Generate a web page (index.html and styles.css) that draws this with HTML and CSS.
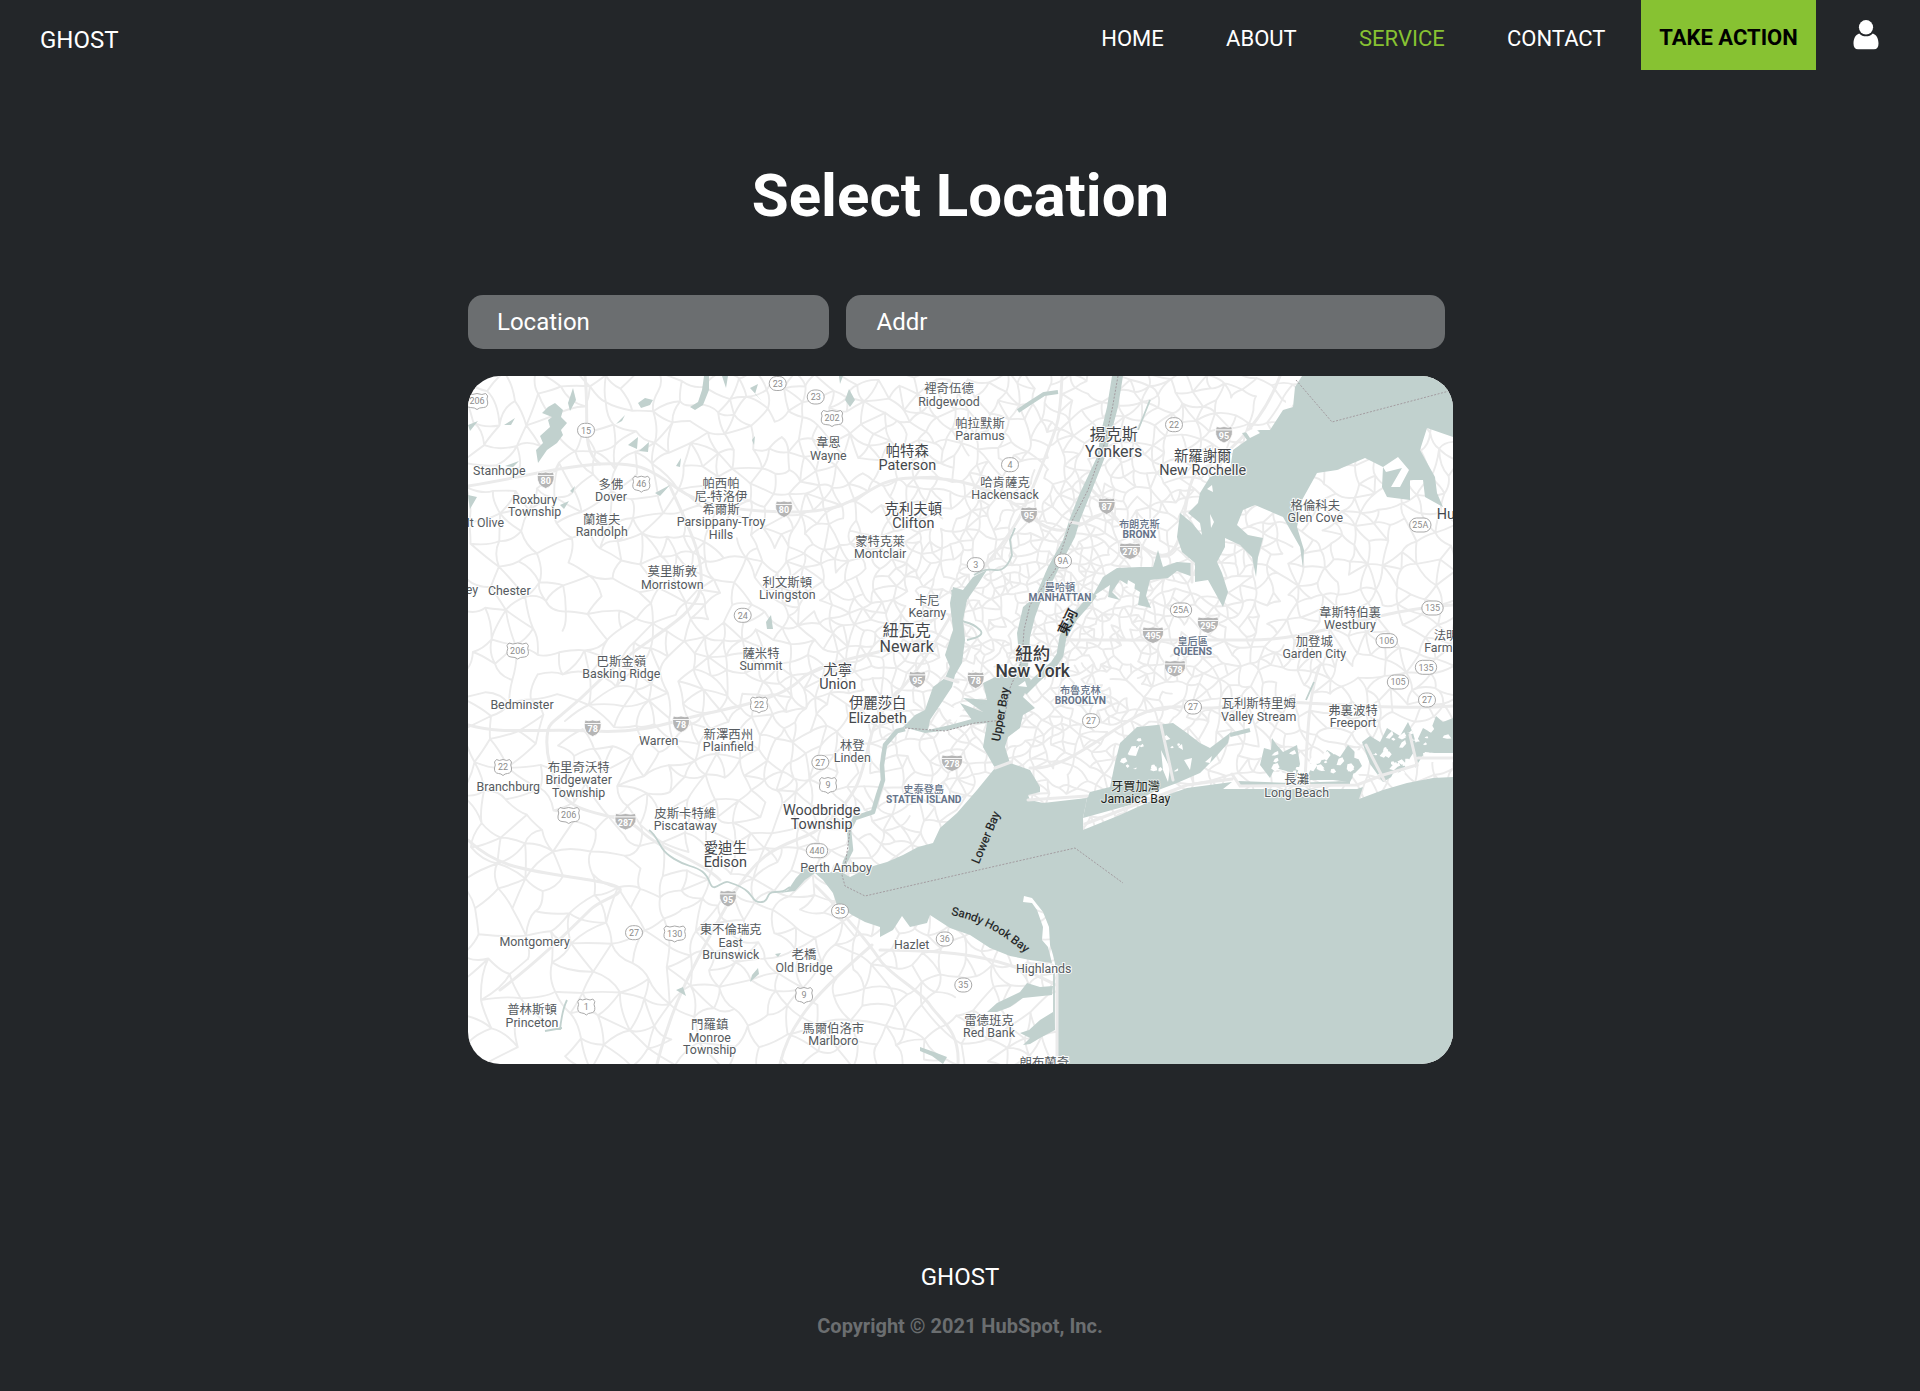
FILE: index.html
```html
<!DOCTYPE html>
<html lang="en">
<head>
<meta charset="utf-8">
<title>Ghost – Select Location</title>
<link rel="stylesheet" href="styles.css">
</head>
<body>
<header class="header">
  <a class="brand">GHOST</a>
  <nav class="nav">
    <a>HOME</a>
    <a>ABOUT</a>
    <a class="active">SERVICE</a>
    <a>CONTACT</a>
  </nav>
  <a class="cta">TAKE ACTION</a>
  <svg class="user" viewBox="0 0 26 30" width="26" height="30">
    <ellipse cx="13" cy="7.3" rx="7.1" ry="7.3"/>
    <path d="M6.2 13.4C8 15.3 10.300 16.300 13 16.300S18 15.300 19.800 13.400C23.800 15 25.500 18.500 25.500 23.500C25.500 27.200 24 29.300 21 29.300H5C2 29.300 .5 27.200 .5 23.500C.5 18.500 2.200 15 6.200 13.400Z"/>
  </svg>
</header>
<main class="main">
  <h1>Select Location</h1>
  <form class="fields">
    <div class="field">Location</div>
    <div class="field wide">Addr</div>
  </form>
  <div class="map">
    <svg viewBox="468 376 985 688" width="985" height="688">
      <g id="mesh" class="road"></g>
      <g class="road major">
        <path d="M468 725C500 735 540 728 592 731S670 722 700 715S780 700 800 680S880 655 920 640"/>
        <path d="M468 486C520 478 560 466 600 464S650 470 668 482S700 510 784 512S860 480 910 478S1000 490 1029 515S1070 530 1100 515"/>
        <path d="M585 376C590 420 580 450 600 464M668 482C690 530 706 560 700 590S640 640 600 680S550 720 548 730S545 760 560 790S620 810 640 830S700 860 720 880"/>
        <path d="M657 1064C670 1010 690 970 730 900S800 850 830 820S860 780 870 740S900 700 930 650S960 600 990 560S1020 520 1040 470S1060 420 1062 376"/>
        <path d="M468 840C500 870 530 870 590 880S605 895 590 910S540 960 500 990"/>
        <path d="M815 885C850 920 870 945 880 960S920 990 930 1005S960 1030 958 1064M872 945C820 990 790 1020 780 1064M880 950C950 950 1000 955 1056 985"/>
        <path d="M1060 640C1100 640 1180 640 1250 640S1370 610 1453 605M1030 768C1060 770 1090 745 1130 720S1200 715 1230 705S1380 712 1453 706M1320 665C1310 690 1308 720 1305 780"/>
        <path d="M1080 480C1110 500 1130 550 1160 555S1180 480 1200 470S1260 430 1280 376"/>
      </g>
      <g class="water">
        <path d="M815 873L823 880L833 893L837 905L852 915L865 922L880 927V937L893 930L902 916L910 927L927 923L930 915L950 928L970 935L990 948L1010 956L1030 960L1052 963L1048 947L1042 940L1043 927L1037 910L1032 903L1023 902L1024 896L1032 898L1043 912L1049 927L1050 945L1053 955L1057 973L1058 1017L1056 1064H1453V777L1433 778L1407 783L1383 790L1359 799L1363 787L1357 789L1320 789L1270 789L1223 789L1232 782L1187 788L1153 800L1120 815L1083 830V818L1087 798L1043 803L1030 800L1028 795L1040 792V787L1030 770L1010 763L1005 747L1008 737L1020 728L1023 715L1035 708L1023 697L1031 680L1020 665L983 683L987 700L963 698L983 712L960 703L972 720L987 723L983 747L995 768L977 790L957 813L940 828L933 843L918 847L903 855L887 862L870 867L850 877L843 873L838 872Z"/>
        <path d="M1112 376L1107 407L1102 428L1097 457L1080 493L1070 518L1063 540L1048 567L1035 597L1023 607L1017 633L1020 667H1028L1030 637L1035 617L1040 603L1053 580L1063 560L1075 537L1080 520L1092 490L1105 457L1112 430L1118 407L1123 376Z"/>
        <path d="M903 727L915 715L925 710L933 687L945 678L950 667L945 655L953 630L950 603L953 587L963 590L973 577L987 570L978 584L967 600L963 620L965 640L962 663L955 675L952 687L930 720L928 730L950 725L972 719H988V723L972 724L950 730L925 733Z"/>
        <path d="M1302 376L1295 387L1293 407L1283 410L1270 430H1260L1242 433L1247 440L1233 450L1230 470L1210 477L1200 493L1198 503L1188 513L1200 523L1202 535L1192 523L1180 513L1177 537L1182 552L1195 563V582L1208 580L1223 607L1228 592L1222 573L1217 562L1225 547V538L1240 545L1252 557L1256 577L1258 557L1263 538L1248 535L1237 525L1243 510L1255 505L1283 517L1292 533L1300 547L1303 568L1304 550L1297 527L1302 500L1317 473L1337 470L1365 458L1383 467L1382 487L1387 497L1410 500V480L1423 480L1425 497L1443 507L1437 493L1435 477L1420 450L1427 428L1453 437V376Z"/>
        <path d="M1120 743L1137 727L1157 725L1173 723L1187 733L1200 743L1210 748L1230 733L1228 743L1213 760L1200 773L1177 783L1153 792L1130 805L1083 818L1087 798L1090 792L1110 787L1115 763Z"/>
        <path d="M1092 597L1103 577L1117 568L1140 567L1153 567L1158 550L1163 567L1177 562L1192 563L1193 577L1177 571L1168 578L1150 580L1146 596L1151 608L1138 605L1140 592L1120 580L1112 592L1120 600L1108 597L1110 585Z"/>
        <path d="M1260 765L1264 748L1271 750L1272 738L1276 744L1283 752L1297 745L1300 764L1296 778L1290 772L1275 768L1270 778ZM1306 780L1312 766L1320 763L1327 750L1340 757L1348 745L1355 752L1362 766L1355 773L1350 782L1333 780ZM1362 742L1370 736L1380 742L1387 728L1400 736L1408 722L1413 733L1417 747L1410 758L1403 770L1383 782L1370 764ZM1415 745L1423 728L1430 732L1436 716L1443 722L1453 718V755L1425 752L1415 768Z"/>
        <path d="M987 1012L997 1003L1020 992L1027 983L1040 987L1053 986L1052 995L1023 998L1010 1007L997 1012ZM1023 1045L1030 1038L1020 1033L1029 1030L1040 1020L1053 1012L1055 1030L1040 1038L1030 1044ZM788 890L796 878L808 865L815 873L805 880L795 891L780 893Z"/>
        <path d="M555 403L563 410L561 417L567 423L561 430L563 435L557 443L547 450L538 463L536 450L543 443L540 436L550 427L548 420L552 417L542 413L548 407ZM568 403L573 388L576 400L570 411ZM638 403L645 398L653 400L650 405L641 408ZM690 407L698 402L702 390L704 376H709V390L703 405L695 410ZM722 376H728L726 388ZM845 400L849 389L855 400L850 407ZM843 376H839L840 384ZM628 445L638 437L637 449ZM639 451L649 442L648 452ZM616 424L625 415L622 421ZM504 425L515 418L511 425ZM468 495L477 497L470 509ZM468 425L478 421L470 431ZM676 466L681 458L680 467ZM752 440L755 436L754 445ZM505 466L519 461L513 467ZM655 493L670 485L660 496ZM750 388L758 384L755 394L762 401ZM560 505L569 501L564 509ZM570 491L575 486L573 493ZM766 622L771 615L773 629H767ZM676 990L683 987L686 996ZM752 975L758 968L759 974L750 982ZM775 954L781 953L778 957ZM920 1047L934 1052L947 1057L943 1064L932 1056L920 1051Z"/>
        <path class="line w6" d="M1024 692L1036 680L1054 664L1060 655L1063 637L1074 618L1088 602L1094 594"/>
        <path class="line w5" d="M905 729L897 731L885 745L882 765L883 780L878 795L873 812L855 818L849 830L851 850L845 862L843 873"/>
        <path class="line w2" d="M649 830C655 834 657 840 662 848S680 863 690 866S706 872 710 883S722 880 728 882S742 886 748 892S754 903 762 902S765 892 775 892S785 890 790 887"/>
        <path class="line w2" d="M974 575Q984 568 995 570T1012 555L1010 540L1015 528M1138 430L1150 400M952 590Q956 620 965 622T980 630T967 640M985 705L970 700M1306 700L1314 682M560 1030Q562 1010 567 1000M1054 973V1030M545 1031L562 1028"/>
        <path class="line w4" d="M1018 411L1030 403L1044 394L1058 392M1238 783L1290 785L1350 783M1230 735L1250 730"/>
      </g>
      <g class="land">
        <path d="M1383 467L1398 457L1409 470L1400 487H1391L1402 468L1386 472ZM1286 400L1293 398L1292 406L1286 405ZM1246 432L1255 428L1260 433L1250 438ZM1210 514L1214 522L1211 528ZM1207 489L1212 485L1213 492ZM1128 580L1135 584L1134 592L1127 586ZM1140 745L1136 756L1128 755ZM1161 750L1170 768L1168 782L1163 770ZM1190 770L1184 760L1192 758ZM1178 747L1182 744L1183 750ZM1205 762L1212 756L1210 763ZM1423 753H1453V762H1425ZM945 705L964 711L955 722L948 718ZM1018 686L1025 681L1027 687Z"/>
      </g>
      <g id="marsh" class="land"></g>
      <g class="road major">
        <path d="M995 768L1011 762M1161 725L1173 780M1192 563V582M1366 745L1384 780M1410 735L1417 765L1383 775L1357 785L1240 786L1232 774M1057 975V1064M1070 522L1082 524M1028 800L1087 796M1085 824L1187 785L1232 779M1418 758H1453M945 678L958 682"/>
      </g>
      <path class="border" d="M1296 380L1332 422L1453 390M850 830L846 860L842 875L845 886L865 896L1075 848L1123 883M1118 376L1112 410L1104 445L1088 490L1070 525L1055 570L1030 605L1024 630L1022 660L1010 688L1004 720L975 723L945 731L905 728"/>
      <g id="shields"></g>
      <g id="labels"></g>
      <defs><path id="sandy" d="M951 915Q987 921 1024 952L1034 961"/></defs>
      <text class="sea curved"><textPath href="#sandy">Sandy Hook Bay</textPath></text>
      <text class="sea mid" transform="translate(1004.500 715) rotate(-80)">Upper Bay</text>
      <text class="sea mid" transform="translate(989.500 839) rotate(-67)">Lower Bay</text>
      <text class="sea mid east" transform="translate(1072 624) rotate(-64)">東河</text>
    </svg>
  </div>
</main>
<footer class="footer">
  <div class="brand">GHOST</div>
  <p>Copyright © 2021 HubSpot, Inc.</p>
</footer>
<script src="map.js"></script>
</body>
</html>
```
FILE: styles.css
```css
* { box-sizing: border-box; }
body {
  margin: 0;
  height: 1391px;
  display: flex;
  flex-direction: column;
  background: #232629;
  color: #fff;
  font-family: Roboto, "Noto Sans CJK TC", sans-serif;
}
.header {
  height: 70px;
  display: flex;
  align-items: flex-start;
  padding: 0 41.500px 0 40px;
}
.brand { font-size: 24px; line-height: 28px; }
.header .brand { margin-top: 26px; }
.nav {
  display: flex;
  gap: 62.300px;
  margin: 26px 35.500px 0 auto;
  font-size: 22px;
  line-height: 26px;
}
.nav .active { color: #87c232; }
.cta {
  width: 175px;
  height: 70px;
  padding-top: 25px;
  background: #87c232;
  color: #000;
  font-size: 22px;
  font-weight: 700;
  line-height: 26px;
  text-align: center;
}
.user { margin: 20px 0 0 36.500px; fill: #fff; }
.main {
  width: 985px;
  margin: 0 auto;
}
h1 {
  margin: 91px 0 0;
  padding-left: 1px;
  font-size: 60px;
  font-weight: 700;
  line-height: 70px;
  text-align: center;
}
.fields {
  display: grid;
  grid-template-columns: 361px 599px;
  gap: 17px;
  margin: 64px 0 27px;
}
.field {
  height: 54px;
  padding-left: 29.500px;
  border-radius: 15px;
  background: #6b6e70;
  font-size: 24px;
  line-height: 54px;
}
.field.wide { padding-left: 31px; }
.map {
  height: 688px;
  border-radius: 32px;
  overflow: hidden;
  background: #fff;
}
.map svg { display: block; }
.road { fill: none; stroke: #ebebeb; stroke-width: 1.900; stroke-linecap: round; }
.road.major { stroke-width: 3; }
.water { fill: #c1d1ce; }
.water .line { fill: none; stroke: #c1d1ce; stroke-linejoin: round; }
.w2 { stroke-width: 1.800; }
.w4 { stroke-width: 4; }
.w5 { stroke-width: 4.500; }
.w6 { stroke-width: 7; }
.land { fill: #fff; }
.border { fill: none; stroke: #a39ca0; stroke-width: 1; stroke-dasharray: 2 1.500; }
#labels text {
  text-anchor: middle;
  fill: #565b60;
  stroke: #fff;
  stroke-width: 2.200px;
  stroke-opacity: .85;
  stroke-linejoin: round;
  paint-order: stroke;
  font-size: 12.400px;
}
#labels .m { font-size: 14.400px; fill: #45484c; }
#labels .l { font-size: 16px; fill: #45484c; }
#labels .x { font-size: 17.500px; font-weight: 500; fill: #3a3c40; }
#labels .b { font-size: 10.200px; font-weight: 700; fill: #66748a; }
#labels .b .cjk { font-weight: 500; }
#labels .d { font-size: 12.200px; fill: #1e1f20; stroke-opacity: .4; }
#labels .start { text-anchor: start; }
#labels .end { text-anchor: end; }
.sea { font-size: 12px; fill: #1c1d1e; stroke: #1c1d1e; stroke-width: .2px; }
.sea.mid { text-anchor: middle; }
.sea.curved { font-size: 11.700px; }
.sea.east { font-size: 13.500px; font-weight: 500; }
.route { fill: #fff; stroke: #a9a9a9; stroke-width: 1; }
.interstate { fill: #b5b5b5; stroke: #fff; stroke-width: .8; }
.num { font-size: 9px; text-anchor: middle; fill: #8c8c8c; }
.num.inv { font-weight: 700; fill: #fff; }
.footer {
  margin-top: 199px;
  text-align: center;
}
.footer p {
  margin: 23px 0 0;
  color: #6b6e70;
  font-size: 20px;
  font-weight: 700;
  line-height: 24px;
}
```
FILE: map.js
```js
const NS = 'http://www.w3.org/2000/svg';
function add(parent, tag, attrs, text) {
  const el = document.createElementNS(NS, tag);
  for (const k in attrs) el.setAttribute(k, attrs[k]);
  if (text) el.textContent = text;
  parent.appendChild(el);
  return el;
}
let seed = 7;
function rnd() {
  seed = (seed * 16807) % 2147483647;
  return seed / 2147483647;
}

// Street network: scattered junctions, denser near the city, joined to their close neighbours.
const pts = [];
const spacing = (x, y) => Math.max(5.6, 4 + 0.029 * Math.hypot(x - 1060, (y - 630) * 1.1));
for (let i = 0; i < 28000; i++) {
  const x = 460 + rnd() * 1000, y = 370 + rnd() * 700, r = spacing(x, y), r2 = r * r;
  if (pts.every(p => (p[0] - x) ** 2 + (p[1] - y) ** 2 > r2)) pts.push([x, y, r]);
}
let d = '';
pts.forEach((p, i) => {
  const near = [];
  pts.forEach((q, j) => {
    const s = (p[0] - q[0]) ** 2 + (p[1] - q[1]) ** 2;
    if (j !== i && s < p[2] * p[2] * 6) near.push([q, j, s]);
  });
  near.forEach(([q, j, s]) => {
    if (j < i) return;
    const mx = (p[0] + q[0]) / 2, my = (p[1] + q[1]) / 2;
    if (near.some(([t, k]) => k !== j && (t[0] - mx) ** 2 + (t[1] - my) ** 2 < s / 4)) return;
    if (rnd() < 0.22) return;
    const b = p[2] * 0.6;
    d += `M${p[0].toFixed(1)} ${p[1].toFixed(1)}Q${(mx + (rnd() - .5) * b).toFixed(1)} ${(my + (rnd() - .5) * b).toFixed(1)} ${q[0].toFixed(1)} ${q[1].toFixed(1)}`;
  });
});
add(document.getElementById('mesh'), 'path', { d });

// Small marsh islands in the southern bays.
let m = '';
[[1120, 735, 90, 45, 13], [1262, 748, 36, 26, 9], [1310, 750, 48, 28, 14], [1368, 733, 46, 44, 22], [1420, 728, 26, 24, 4]].forEach(([x, y, w, h, n]) => {
  for (let i = 0; i < n; i++) {
    const a = x + rnd() * w, b = y + rnd() * h, s = 1.5 + rnd() * 3;
    m += `M${a} ${b}l${s} ${-s * rnd()}l${s * rnd()} ${s}l${-s} ${s * rnd() * 1.5}l${-s} ${-s * rnd()}z`;
  }
});
add(document.getElementById('marsh'), 'path', { d: m });

// type (o state, u US, i interstate), x, y, number
const routes = `o 777.7 383.5 23|o 586 430.3 15|o 815.7 397 23|o 1010 464.7 4|o 975.7 564.7 3|o 1063 561 9A|o 1174 424.7 22|o 1420.3 525 25A|o 742.7 615.3 24|o 820.3 762.3 27|o 1091 720.7 27|o 1181 610 25A|o 1432.5 608 135|o 1386.7 640.7 106|o 1426 667.3 135|o 1398 682 105|o 1427 700 27|o 1193 707 27|o 817 850.7 440|o 840 911 35|o 944.7 939 36|o 963.3 985 35|o 634 932.7 27|u 477 401 206|u 641.3 483.7 46|u 832 418 202|u 517.7 650.5 206|u 759 704.5 22|u 503 767 22|u 568.7 815 206|u 828 785 9|u 674.7 933.5 130|u 586.3 1006.5 1|u 804 995 9|i 545.7 480 80|i 784 509 80|i 1029 515 95|i 1106.7 506 87|i 1224 434.5 95|i 1130 551 278|i 592.7 728 78|i 681 724 78|i 625.5 821.5 287|i 917.3 679.5 95|i 975.7 680 78|i 952 763 278|i 1153 635 495|i 1208 625 295|i 1175 668.5 678|i 728 898.5 95`;
const sg = document.getElementById('shields');
routes.split('|').forEach(r => {
  const [t, x, y, n] = r.split(' ');
  const g = add(sg, 'g', { transform: `translate(${x} ${y})` });
  const w = n.length > 2 ? 10.7 : 8.5;
  if (t === 'o') add(g, 'rect', { class: 'route', x: -w, y: -7, width: 2 * w, height: 14, rx: 7 });
  else if (t === 'u') add(g, 'path', { class: 'route', d: `M${-w + 2} -7.500Q${-w / 2} -5.500 0 -7.500Q${w / 2} -5.500 ${w - 2} -7.500L${w} -5Q${w - 1.500} -2 ${w} 1Q${w + .5} 6 ${w - 4} 6.500Q2 6.500 0 8.500Q-2 6.500 ${-w + 4} 6.500Q${-w - .5} 6 ${-w} 1Q${-w + 1.500} -2 ${-w} -5Z` });
  else {
    add(g, 'path', { class: 'interstate', d: `M${-w + 1} -8Q${-w / 2} -6.500 0 -8Q${w / 2} -6.500 ${w - 1} -8L${w} -4.500H${-w}Z` });
    add(g, 'path', { class: 'interstate', d: `M${-w} -4.500H${w}Q${w + .5} 5.500 0 8.500Q${-w - .5} 5.500 ${-w} -4.500Z` });
  }
  add(g, 'text', { class: t === 'i' ? 'num inv' : 'num', y: t === 'i' ? 4 : 3.300 }, n);
});

// size class, x, baseline of the last line, lines
const labels = `s 499.3 474.7 Stanhope|s 534.7 515.7 Roxbury/Township|s,end 504 527 Mt Olive|s 611 500.7 多佛/Dover|s 601.7 536 蘭道夫/Randolph|s 721 538.3 帕西帕/尼-特洛伊/希爾斯/Parsippany-Troy/Hills|s 672.3 588.3 莫里斯敦/Morristown|s 509.3 594.3 Chester|s,end 478 594 ey|s 787.3 599 利文斯頓/Livingston|s 949 405.3 裡奇伍德/Ridgewood|s 980 439.7 帕拉默斯/Paramus|s 828.3 459.3 韋恩/Wayne|m 907.3 469.7 帕特森/Paterson|s 1005 499 哈肯薩克/Hackensack|m 913.3 528 克利夫頓/Clifton|s 880 558 蒙特克萊/Montclair|s 927.3 616.7 卡尼/Kearny|l 1113.7 456.2 揚克斯/Yonkers|b 1060 600.7 曼哈頓/MANHATTAN|b 1139.3 537.3 布朗克斯/BRONX|m 1202.7 475 新羅謝爾/New Rochelle|s 1315.3 521.7 格倫科夫/Glen Cove|m,start 1436.7 518.7 Huntington|s 621.3 677.7 巴斯金嶺/Basking Ridge|s 761 669.7 薩米特/Summit|s 522 709 Bedminster|s 658.7 744.7 Warren|s 728.3 750.7 新澤西州/Plainfield|s 578.7 796.3 布里奇沃特/Bridgewater/Township|s 508.3 791 Branchburg|s 685.3 829.7 皮斯卡特維/Piscataway|l 906.7 652 紐瓦克/Newark|m 837.7 689 尤寧/Union|m 877.7 722.3 伊麗莎白/Elizabeth|s 852.3 762 林登/Linden|x 1032.7 677 紐約/New York|b 923.7 803 史泰登島/STATEN ISLAND|m 821.6 829 Woodbridge/Township|b 1080.3 703.7 布魯克林/BROOKLYN|b 1192.7 654.3 皇后區/QUEENS|s 1350 629 韋斯特伯裏/Westbury|s 1314.3 658 加登城/Garden City|s 1458.5 652 法明代爾/Farmingdale|s 1258.7 720.3 瓦利斯特里姆/Valley Stream|s 1353 726.7 弗裏波特/Freeport|s 1296.7 796.3 長灘/Long Beach|d 1135.5 802.7 牙買加灣/Jamaica Bay|m 725.3 867 愛迪生/Edison|s 730.7 958.7 東不倫瑞克/East/Brunswick|s 534.7 945.3 Montgomery|s 532 1026.3 普林斯頓/Princeton|s 709.7 1053.7 門羅鎮/Monroe/Township|s 804 971.3 老橋/Old Bridge|s 836 871.3 Perth Amboy|s 911.7 948.7 Hazlet|s 1043.7 973 Highlands|s 989 1036.7 雷德班克/Red Bank|s 833.3 1045 馬爾伯洛市/Marlboro|s 1044.3 1066.700 朗布蘭奇`;
const leading = { s: 12.6, m: 14.5, l: 16.3, x: 17.5, b: 10, d: 12.6 };
const lg = document.getElementById('labels');
labels.split('|').forEach(row => {
  const [, cls, x, y, body] = row.match(/^(\S+) (\S+) (\S+) (.+)$/);
  const lines = body.split('/');
  const text = add(lg, 'text', { class: cls.replace(',', ' ') });
  lines.forEach((line, i) => {
    add(text, 'tspan', { x, y: +y + 0.4 - (lines.length - 1 - i) * leading[cls[0]], class: /[一-龥]/.test(line) ? 'cjk' : 'latin' }, line);
  });
});
```
